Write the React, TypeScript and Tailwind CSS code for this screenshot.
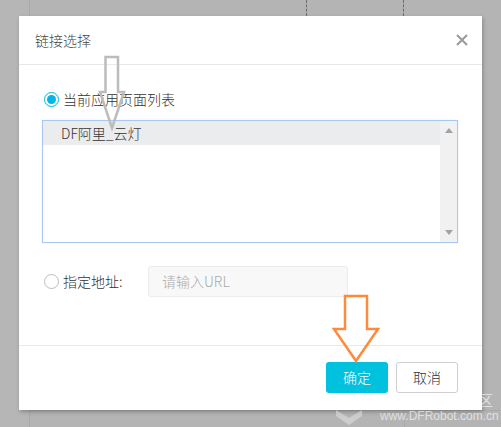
import React from "react";

const cjk = { fontFamily: '"Noto Sans CJK SC", "Noto Sans", sans-serif' };

function Radio({ checked }: { checked: boolean }) {
  return checked ? (
    <span className="flex h-[15px] w-[15px] items-center justify-center rounded-full border border-[#00b7e3] bg-white">
      <span className="h-[9px] w-[9px] rounded-full bg-[#00b7e3]" />
    </span>
  ) : (
    <span className="h-[15px] w-[15px] rounded-full border border-[#bdbdbd] bg-white" />
  );
}

function ListBox() {
  return (
    <div className="flex h-[123px] border border-[#a6c8f1] bg-white shadow-[0_0_1px_#c9dcf5]">
      <div className="flex-1">
        <div className="flex h-[24px] items-center bg-[#ebeced] pl-[18px] text-[14px] text-[#333]">
          DF阿里_云灯
        </div>
      </div>
      <div className="flex w-[17px] flex-col items-center justify-between bg-[#f1f1f1] py-[7px]">
        <svg width="8" height="5" viewBox="0 0 8 5">
          <path d="M0 5 L4 0 L8 5 Z" fill="#a3a3a3" />
        </svg>
        <svg width="8" height="5" viewBox="0 0 8 5">
          <path d="M0 0 L4 5 L8 0 Z" fill="#a3a3a3" />
        </svg>
      </div>
    </div>
  );
}

function Dialog() {
  return (
    <div
      className="absolute left-[19px] top-[16px] flex h-[394px] w-[463px] flex-col bg-white font-light shadow-[1px_2px_4px_rgba(0,0,0,0.25)]"
      style={cjk}
    >
      <div className="flex h-[49px] items-center justify-between border-b border-[#e8e8e8] pl-[16px] pr-[14px]">
        <span className="text-[14px] text-[#444]">链接选择</span>
        <svg width="12" height="12" viewBox="0 0 12 12">
          <path d="M1 1 L11 11 M11 1 L1 11" stroke="#9a9a9a" strokeWidth="2" />
        </svg>
      </div>
      <div className="flex flex-1 flex-col pl-[23px] pr-[24px]">
        <div className="mt-[25px] flex h-[18px] items-center gap-[4px] pl-[2px] text-[14px] text-[#333]">
          <Radio checked />
          <span>当前应用页面列表</span>
        </div>
        <div className="mt-[12px]">
          <ListBox />
        </div>
        <div className="mt-[23px] flex items-center">
          <div className="flex w-[106px] items-center gap-[4px] pl-[2px] text-[14px] text-[#333]">
            <Radio checked={false} />
            <span>指定地址:</span>
          </div>
          <div className="flex h-[31px] w-[200px] items-center rounded-[3px] border border-[#ececec] bg-[#f8f8f8] pl-[13px] text-[14px] text-[#aaa]">
            请输入URL
          </div>
        </div>
      </div>
      <div className="flex h-[65px] items-start justify-end gap-[8px] border-t border-[#e8e8e8] pr-[24px] pt-[16px]">
        <button className="flex h-[31px] w-[62px] items-center justify-center rounded-[3px] bg-[#00c1de] text-[14px] text-white">
          确定
        </button>
        <button className="flex h-[31px] w-[62px] items-center justify-center rounded-[3px] border border-[#cfcfcf] bg-white text-[14px] text-[#333]">
          取消
        </button>
      </div>
    </div>
  );
}

export default function App() {
  return (
    <div className="relative h-[427px] w-[501px] overflow-hidden bg-[#b4b4b4]">
      {/* page behind the modal */}
      <div className="flex h-full">
        <div className="w-[30px] border-r border-[#a9a9a9] bg-[#b6b6b6]" />
        <div className="flex flex-1 flex-col">
          <div className="flex h-[16px]">
            <div className="ml-[276px] w-[98px] border-x border-dashed border-[#6b6b6b]" />
          </div>
          <div className="flex-1" />
          <div className="flex h-[17px] border-t border-[#a9a9a9]">
            <div className="w-[375px] border-r border-[#a9a9a9]" />
          </div>
        </div>
      </div>

      <Dialog />

      {/* annotation arrows */}
      <svg className="pointer-events-none absolute left-0 top-0" width="501" height="427">
        <polygon
          points="105.5,57 118,57 118,92 124,92 112,128 100,92 105.5,92"
          fill="none"
          stroke="#bcbcbc"
          strokeWidth="2.5"
          strokeLinejoin="miter"
        />
        <polygon
          points="345,296 367,296 367,329 378,329 356,361 334,329 345,329"
          fill="none"
          stroke="#ff8a3d"
          strokeWidth="2.5"
        />
      </svg>

      {/* site watermark */}
      <div
        className="pointer-events-none absolute left-[380px] top-[409px] text-[12px] leading-[14px] text-white opacity-60"
        style={{ fontFamily: '"Liberation Sans", sans-serif' }}
      >
        www.DFRobot.com.cn
      </div>
      <div
        className="pointer-events-none absolute left-[478px] top-[392px] text-[15px] leading-[16px] text-white opacity-60"
        style={cjk}
      >
        区
      </div>
      <svg className="pointer-events-none absolute left-[334px] top-[398px] opacity-50" width="30" height="29" viewBox="0 0 30 29">
        <path d="M2 12 L15 20 L28 12 L28 18 L15 27 L2 18 Z" fill="#e6e6e6" />
      </svg>
    </div>
  );
}
